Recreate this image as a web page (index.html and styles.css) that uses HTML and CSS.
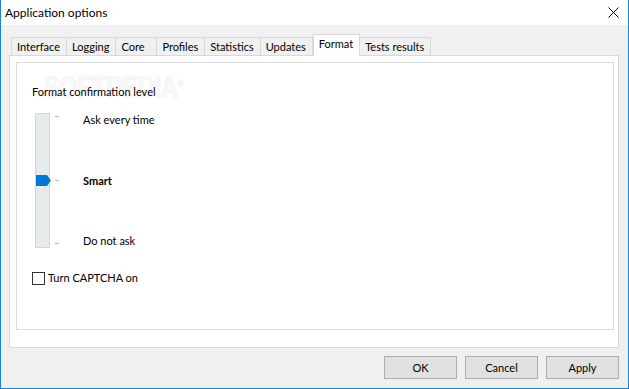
FILE: index.html
```html
<!DOCTYPE html>
<html>
<head>
<meta charset="utf-8">
<link rel="stylesheet" href="styles.css">
</head>
<body>
<div class="window">
  <div class="titlebar">
    <span class="title">Application options</span>
    <svg class="close" width="11" height="11" viewBox="0 0 11 11"><path d="M0.5 0.5 L10.5 10.5 M10.5 0.5 L0.5 10.5" stroke="#000" stroke-width="1" fill="none"/></svg>
  </div>
  <div class="content">
    <div class="tabs">
      <div class="tab">Interface</div>
      <div class="tab">Logging</div>
      <div class="tab">Core</div>
      <div class="tab">Profiles</div>
      <div class="tab">Statistics</div>
      <div class="tab">Updates</div>
      <div class="tab active">Format</div>
      <div class="tab">Tests results</div>
    </div>
    <div class="panel">
      <div class="group">
        <div class="watermark">SOFTPEDIA<sup>®</sup></div>
        <div class="caption">Format confirmation level</div>
        <div class="slider">
          <div class="track">
            <svg class="thumb" width="15" height="11" viewBox="0 0 15 11"><polygon points="0,0 11,0 15,5.5 11,11 0,11" fill="#0078d7"/></svg>
          </div>
          <div class="ticks"><i></i><i></i><i></i></div>
          <div class="labels">
            <span>Ask every time</span>
            <span class="bold">Smart</span>
            <span>Do not ask</span>
          </div>
        </div>
        <label class="check"><span class="box"></span>Turn CAPTCHA on</label>
      </div>
    </div>
    <div class="buttons">
      <div class="btn">OK</div>
      <div class="btn">Cancel</div>
      <div class="btn">Apply</div>
    </div>
  </div>
</div>
</body>
</html>
```
FILE: styles.css
```css
* { box-sizing: border-box; }
html, body { margin: 0; padding: 0; }
body {
  font-family: Lato, "Noto Sans", sans-serif;
  font-size: 11px;
  color: #000;
  background: #f0f0f0;
}
.window {
  width: 629px;
  height: 389px;
  border-left: 1px solid #1883d7;
  border-right: 1px solid #1883d7;
  border-bottom: 1px solid #1883d7;
  background: #f0f0f0;
  display: flex;
  flex-direction: column;
}
.titlebar {
  height: 25px;
  background: #fff;
  display: flex;
  align-items: center;
  justify-content: space-between;
  padding: 0 9px 0 4px;
}
.title { font-size: 12px; line-height: 16px; }
.close { display: block; }
.content {
  flex: 1;
  padding: 9px 9px 9px 8px;
  display: flex;
  flex-direction: column;
}
.tabs {
  display: flex;
  align-items: flex-end;
  height: 21px;
  margin-left: 2px;
  position: relative;
  z-index: 1;
}
.tab {
  height: 18px;
  line-height: 17px;
  padding: 0 6px 0 5px;
  min-width: 41px;
  border: 1px solid #d9d9d9;
  border-bottom: none;
  border-left: none;
  background: #f0f0f0;
  white-space: nowrap;
}
.tab:first-child { border-left: 1px solid #d9d9d9; }
.tab.active {
  height: 22px;
  margin-bottom: -1px;
  background: #fff;
  border-left: 1px solid #d9d9d9;
  line-height: 18px;
}
.panel {
  height: 293px;
  background: #fff;
  border: 1px solid #d9d9d9;
  padding: 6px 4px 17px 6px;
}
.group {
  height: 100%;
  border: 1px solid #dcdcdc;
  position: relative;
  padding: 21px 0 0 15px;
}
.watermark {
  position: absolute;
  left: 26px;
  top: 7px;
  font-family: "Liberation Sans", sans-serif;
  font-weight: bold;
  font-size: 31px;
  letter-spacing: -1px;
  color: #f7f7f7;
  text-shadow: 0 0 1px #e6e6e6;
  transform: scaleX(0.8);
  transform-origin: left top;
  white-space: nowrap;
}
.watermark sup { font-size: 10px; }
.caption { line-height: 16px; position: relative; z-index: 1; }
.slider {
  display: flex;
  margin-top: 13px;
  margin-left: 3px;
  height: 135px;
}
.track {
  width: 15px;
  height: 135px;
  background: #e7eaea;
  border: 1px solid #d6d6d6;
  position: relative;
}
.thumb {
  position: absolute;
  left: 0;
  top: 61px;
  display: block;
}
.ticks {
  display: flex;
  flex-direction: column;
  justify-content: space-between;
  height: 135px;
  padding: 3px 0 4px 5px;
}
.ticks i {
  display: block;
  width: 4px;
  height: 1px;
  background: #b4b4b4;
}
.labels {
  display: flex;
  flex-direction: column;
  justify-content: space-between;
  height: 137px;
  margin-top: -1px;
  margin-left: 24px;
  line-height: 16px;
}
.bold { font-weight: bold; }
.check {
  display: flex;
  align-items: center;
  margin-top: 22px;
  line-height: 16px;
}
.box {
  width: 13px;
  height: 13px;
  border: 1px solid #333;
  background: #fff;
  margin-right: 3px;
}
.buttons {
  margin-top: auto;
  display: flex;
  justify-content: flex-end;
  gap: 8px;
}
.btn {
  width: 73px;
  height: 23px;
  line-height: 21px;
  text-align: center;
  background: #e1e1e1;
  border: 1px solid #adadad;
}
```
